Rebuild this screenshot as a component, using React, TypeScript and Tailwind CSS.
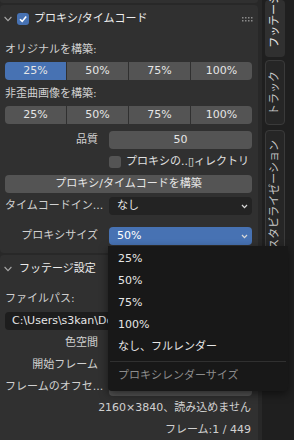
import React from "react"

const FONT = "font-['DejaVu_Sans','Noto_Sans_CJK_JP',sans-serif]"

function Chevron({ className = "" }: { className?: string }) {
  return (
    <svg width="8" height="6" viewBox="0 0 8 6" className={className}>
      <path d="M0.6 1 L4 4.6 L7.4 1" fill="none" stroke="currentColor" strokeWidth="1.1" />
    </svg>
  )
}

function DropArrow() {
  return (
    <svg width="7" height="5" viewBox="0 0 7 5" className="text-[#d8d8d8]">
      <path d="M1 1 L3.5 3.6 L6 1" fill="none" stroke="currentColor" strokeWidth="1.3" />
    </svg>
  )
}

function Grip() {
  const dots = []
  for (let r = 0; r < 2; r++)
    for (let c = 0; c < 4; c++) dots.push(<rect key={`${r}-${c}`} x={c * 3} y={r * 3} width="1.5" height="1.5" fill="#8a8a8a" />)
  return (
    <svg width="12" height="5" viewBox="0 0 12 5">
      {dots}
    </svg>
  )
}

// one row of the 25/50/75/100 segmented buttons
function SegmentRow({ active }: { active?: number }) {
  const items = ["25%", "50%", "75%", "100%"]
  return (
    <div className="flex h-[18px] gap-px">
      {items.map((label, i) => (
        <div
          key={label}
          className={`flex-1 flex items-center justify-center text-[#e6e6e6] ${
            i === active ? "bg-[#4772b3]" : "bg-[#545454]"
          } ${i === 0 ? "rounded-l-[4px]" : ""} ${i === items.length - 1 ? "rounded-r-[4px]" : ""}`}
        >
          {label}
        </div>
      ))}
    </div>
  )
}

function Row({ label, children, mt }: { label: string; children?: React.ReactNode; mt: string }) {
  return (
    <div className={`flex h-[18px] items-center ${mt}`}>
      <div className="w-[93px] text-right text-[#d0d0d0] whitespace-nowrap">{label}</div>
      <div className="ml-[11px] flex-1 h-full">{children}</div>
    </div>
  )
}

function Tab({ label, active, className }: { label: string; active?: boolean; className: string }) {
  return (
    <div
      className={`ml-[3px] w-[20px] flex flex-col items-center overflow-hidden rounded-[4px] ${
        active ? "bg-[#303030] text-[#e6e6e6]" : "bg-[#262626] border border-[#3a3a3a] text-[#c8c8c8]"
      } ${className}`}
    >
      <span className="[writing-mode:vertical-rl] [text-orientation:sideways] rotate-180 whitespace-nowrap leading-[20px]">
        {label}
      </span>
    </div>
  )
}

export default function App() {
  return (
    <div className={`relative w-[294px] h-[440px] overflow-hidden flex bg-[#282828] text-[11px] ${FONT}`}>
      {/* Panels */}
      <div className="w-[262px] flex flex-col">
        <div className="h-[3px] w-[258px] bg-[#303030] rounded-b-[4px]" />

        {/* Proxy / timecode panel */}
        <div className="mt-[2px] w-[258px] bg-[#303030] rounded-[4px] pb-[8px]">
          <div className="h-[28px] flex items-center pl-[4px] pr-[4px]">
            <Chevron className="text-[#a8a8a8]" />
            <div className="ml-[5px] w-[12px] h-[12px] rounded-[3px] bg-[#4772b3] flex items-center justify-center">
              <svg width="10" height="10" viewBox="0 0 10 10">
                <path d="M2 5.2 L4.2 7.4 L8.2 2.4" fill="none" stroke="white" strokeWidth="1.6" />
              </svg>
            </div>
            <div className="ml-[5px] text-[#ececec]">プロキシ/タイムコード</div>
            <div className="ml-auto">
              <Grip />
            </div>
          </div>

          <div className="pl-[5px] pr-[6px]">
            <div className="mt-[8px] h-[18px] flex items-center text-[#d0d0d0]">オリジナルを構築:</div>
            <div className="mt-[3px]">
              <SegmentRow active={0} />
            </div>
            <div className="mt-[5px] h-[18px] flex items-center text-[#d0d0d0]">非歪曲画像を構築:</div>
            <div className="mt-[3px]">
              <SegmentRow />
            </div>

            <Row label="品質" mt="mt-[7px]">
              <div className="h-full rounded-[4px] bg-[#545454] flex items-center justify-center text-[#e6e6e6]">50</div>
            </Row>

            <div className="mt-[4px] h-[18px] flex items-center pl-[104px]">
              <div className="w-[12px] h-[12px] rounded-[3px] bg-[#545454]" />
              <div className="ml-[5px] text-[#e0e0e0] whitespace-nowrap">プロキシの..▯ィレクトリ</div>
            </div>

            <div className="mt-[4px] h-[18px] rounded-[4px] bg-[#545454] flex items-center justify-center text-[#e6e6e6]">
              プロキシ/タイムコードを構築
            </div>

            <Row label="タイムコードイン..." mt="mt-[4px]">
              <div className="h-full rounded-[4px] bg-[#232323] flex items-center pl-[8px] pr-[4px] text-[#e6e6e6]">
                なし
                <span className="ml-auto">
                  <DropArrow />
                </span>
              </div>
            </Row>

            <Row label="プロキシサイズ" mt="mt-[12px]">
              <div className="h-full rounded-[4px] bg-[#4772b3] flex items-center pl-[8px] pr-[4px] text-white">
                50%
                <span className="ml-auto">
                  <DropArrow />
                </span>
              </div>
            </Row>
          </div>
        </div>

        {/* Footage settings panel */}
        <div className="mt-[2px] w-[258px] flex-1 bg-[#303030] rounded-t-[4px]">
          <div className="h-[28px] flex items-center pl-[4px]">
            <Chevron className="text-[#a8a8a8]" />
            <div className="ml-[7px] text-[#ececec]">フッテージ設定</div>
          </div>
          <div className="pl-[5px] pr-[6px]">
            <div className="mt-[7px] h-[18px] flex items-center text-[#d0d0d0]">ファイルパス:</div>
            <div className="mt-[4px] h-[18px] rounded-[4px] bg-[#1d1d1d] flex items-center pl-[7px] text-[#e6e6e6] whitespace-nowrap overflow-hidden">
              C:\Users\s3kan\Downloads\
            </div>
            <Row label="色空間" mt="mt-[4px]">
              <div className="h-full rounded-[4px] bg-[#232323]" />
            </Row>
            <Row label="開始フレーム" mt="mt-[4px]">
              <div className="h-full rounded-[4px] bg-[#545454]" />
            </Row>
            <Row label="フレームのオフセ..." mt="mt-[4px]">
              <div className="h-full rounded-[4px] bg-[#545454]" />
            </Row>
            <div className="mt-[3px] h-[18px] flex items-center justify-end pr-px text-[#d0d0d0] whitespace-nowrap">
              2160×3840、読み込めません
            </div>
            <div className="mt-[4px] h-[18px] flex items-center justify-end pr-px text-[#d0d0d0] whitespace-nowrap">
              フレーム:1 / 449
            </div>
          </div>
        </div>
      </div>

      {/* Sidebar tabs */}
      <div className="w-[32px] bg-[#1f1f1f] flex flex-col">
        <Tab label="フッテージ" active className="h-[57px] justify-end pb-[9px]" />
        <Tab label="トラック" className="mt-[3px] h-[65px] justify-center" />
        <Tab label="スタビライゼーション" className="mt-[5px] h-[130px] justify-center" />
      </div>

      {/* Proxy size dropdown menu */}
      <div className="absolute left-[108px] top-[246px] w-[180px] h-[145px] bg-[#181818] rounded-b-[4px] shadow-[0_3px_8px_rgba(0,0,0,0.5)] pt-[2px] pb-[4px]">
        {["25%", "50%", "75%", "100%", "なし、フルレンダー"].map((item) => (
          <div key={item} className="h-[22px] flex items-center pl-[10px] text-[#e6e6e6]">
            {item}
          </div>
        ))}
        <div className="mt-[3px] mx-[2px] h-px bg-[#303030]" />
        <div className="mt-[3px] h-[22px] flex items-center pl-[10px] text-[#8c8c8c]">プロキシレンダーサイズ</div>
      </div>
    </div>
  )
}
